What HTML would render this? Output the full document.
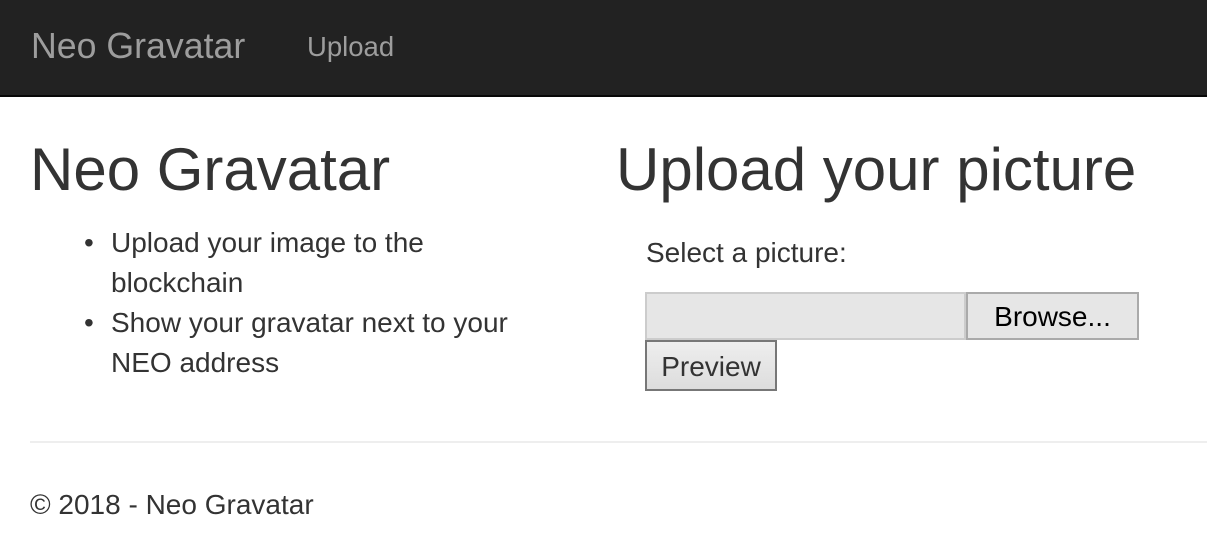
<!DOCTYPE html>
<html><head><meta charset="utf-8"><style>
*{margin:0;padding:0;box-sizing:border-box}
body{width:1207px;height:549px;overflow:hidden;background:#fff;font-family:"Liberation Sans",Arial,sans-serif;color:#333;position:relative}
.nav{position:absolute;left:0;top:0;width:1207px;height:97px;background:#222;border-bottom:2px solid #080808}
.a{position:absolute;white-space:nowrap}
.brand{left:31px;top:26px;font-size:35.7px;line-height:40px;color:#9d9d9d}
.nl{left:307px;top:31px;font-size:27.5px;line-height:32px;color:#9d9d9d}
h1{position:absolute;font-weight:normal;font-size:60px;line-height:67px;top:136px;white-space:nowrap}
ul{position:absolute;left:111px;top:223px;width:420px;font-size:28px;line-height:40px;list-style:none}
li{position:relative}
li:before{content:"•";position:absolute;left:-27px}
.t{font-size:28px;line-height:40px}
.inp{position:absolute;left:645px;top:292px;width:321px;height:48px;background:#e6e6e6;border:2px solid #ccc}
.btn{position:absolute;background:linear-gradient(#eee,#ddd);font-size:28px;text-align:center;color:#000}
.br{left:966px;top:292px;width:173px;height:48px;border:2px solid #aaa;line-height:46px;background:#e6e6e6}
.pv{left:645px;top:340px;width:132px;height:51px;border:2px solid #777;line-height:50px;color:#333}
.hr{position:absolute;left:30px;top:441px;width:1177px;height:2px;background:#eee}
</style></head><body>
<div class="nav"><div class="a brand">Neo Gravatar</div><div class="a nl">Upload</div></div>
<h1 style="left:30px">Neo Gravatar</h1>
<h1 style="left:616px">Upload your picture</h1>
<ul><li>Upload your image to the blockchain</li><li>Show your gravatar next to your NEO address</li></ul>
<div class="a t" style="left:646px;top:233px">Select a picture:</div>
<div class="inp"></div>
<div class="btn br">Browse...</div>
<div class="btn pv">Preview</div>
<div class="hr"></div>
<div class="a t" style="left:30px;top:485px">© 2018 - Neo Gravatar</div>
</body></html>
